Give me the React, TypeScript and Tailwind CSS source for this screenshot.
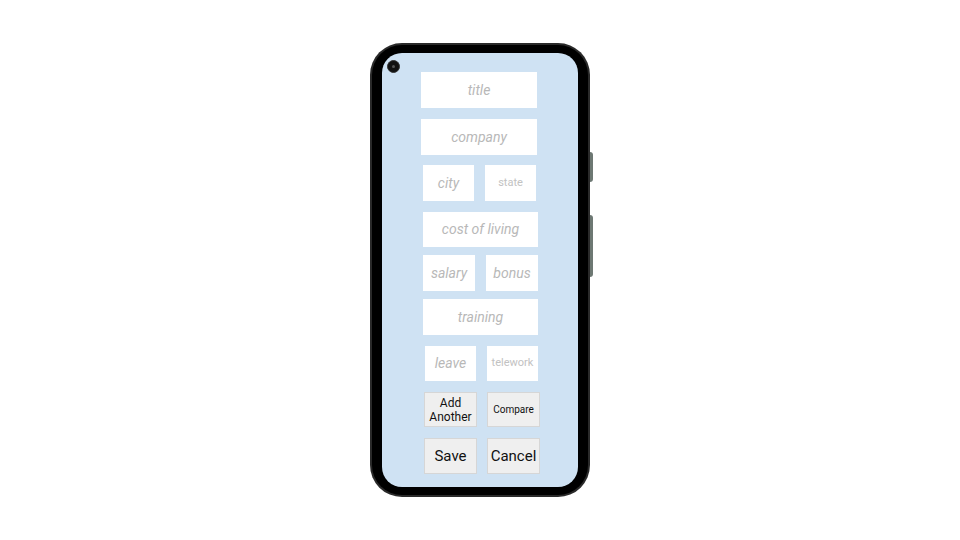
import React from "react";

const Box = ({ label, size, w, h = "h-[36px]", upright }: { label: string; size: string; w: string; h?: string; upright?: boolean }) => (
  <div className={`${w} ${h} bg-white flex items-center justify-center`}>
    <span className={`${size} ${upright ? "text-[#c2c2c2]" : "italic text-[#b8b8b8]"}`}>{label}</span>
  </div>
);

const Btn = ({ children, size, h = "h-[36px]" }: { children: React.ReactNode; size: string; h?: string }) => (
  <button className={`w-[53px] ${h} bg-[#efefef] border border-[#d6d6d6] text-[#111] leading-[14px] ${size} flex items-center justify-center text-center`}>
    {children}
  </button>
);

export default function App() {
  return (
    <div className="w-full h-[540px] bg-white flex items-center justify-center" style={{ fontFamily: "Roboto, 'Noto Sans', sans-serif" }}>
      <div className="relative w-[220px] h-[454px] rounded-[32px] bg-[#2a2a2a] p-[2px]">
        {/* side buttons */}
        <div className="absolute right-[-3px] top-[109px] w-[3px] h-[30px] bg-[#6d7873] rounded-r-sm" />
        <div className="absolute right-[-3px] top-[172px] w-[3px] h-[62px] bg-[#6d7873] rounded-r-sm" />
        <div className="w-full h-full rounded-[30px] bg-black pt-[8px] pb-[8px] pl-[10px] pr-[10px]">
          <div className="relative w-full h-full rounded-[20px] bg-[#cfe2f3] flex flex-col">
            {/* camera */}
            <div className="absolute left-[5px] top-[7px] w-[13px] h-[13px] rounded-full bg-[#111] border border-[#333] flex items-center justify-center">
              <div className="w-[3px] h-[3px] rounded-full bg-[#555]" />
            </div>

            <div className="mt-[19px] ml-[39px]">
              <Box label="title" size="text-[14px]" w="w-[116px]" />
            </div>
            <div className="mt-[11px] ml-[39px]">
              <Box label="company" size="text-[14px]" w="w-[116px]" />
            </div>
            <div className="mt-[10px] ml-[41px] flex gap-[11px]">
              <Box label="city" size="text-[14px]" w="w-[51px]" />
              <Box label="state" size="text-[11px]" w="w-[51px]" upright />
            </div>
            <div className="mt-[11px] ml-[41px]">
              <Box label="cost of living" size="text-[14px]" w="w-[115px]" h="h-[35px]" />
            </div>
            <div className="mt-[8px] ml-[41px] flex gap-[11px]">
              <Box label="salary" size="text-[14px]" w="w-[52px]" />
              <Box label="bonus" size="text-[14px]" w="w-[52px]" />
            </div>
            <div className="mt-[8px] ml-[41px]">
              <Box label="training" size="text-[14px]" w="w-[115px]" />
            </div>
            <div className="mt-[11px] ml-[43px] flex gap-[11px]">
              <Box label="leave" size="text-[14px]" w="w-[51px]" h="h-[35px]" />
              <Box label="telework" size="text-[11px]" w="w-[51px]" h="h-[35px]" upright />
            </div>
            <div className="mt-[11px] ml-[42px] flex gap-[10px]">
              <Btn size="text-[12px] leading-[14px]" h="h-[35px]">
                <span className="leading-[14px]">
                  Add
                  <br />
                  Another
                </span>
              </Btn>
              <Btn size="text-[10px]" h="h-[35px]">Compare</Btn>
            </div>
            <div className="mt-[11px] ml-[42px] flex gap-[10px]">
              <Btn size="text-[15px]">Save</Btn>
              <Btn size="text-[15px]">Cancel</Btn>
            </div>
          </div>
        </div>
      </div>
    </div>
  );
}
